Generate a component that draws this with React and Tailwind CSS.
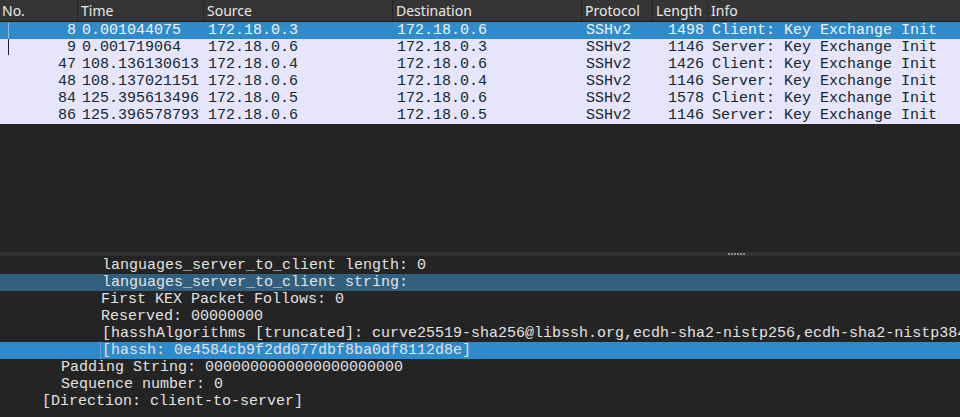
import React from 'react';

const mono = { fontFamily: '"Liberation Mono", "DejaVu Sans Mono", monospace' };

const packets = [
  { no: 8, time: '0.001044075', src: '172.18.0.3', dst: '172.18.0.6', proto: 'SSHv2', len: 1498, info: 'Client: Key Exchange Init', selected: true },
  { no: 9, time: '0.001719064', src: '172.18.0.6', dst: '172.18.0.3', proto: 'SSHv2', len: 1146, info: 'Server: Key Exchange Init' },
  { no: 47, time: '108.136130613', src: '172.18.0.4', dst: '172.18.0.6', proto: 'SSHv2', len: 1426, info: 'Client: Key Exchange Init' },
  { no: 48, time: '108.137021151', src: '172.18.0.6', dst: '172.18.0.4', proto: 'SSHv2', len: 1146, info: 'Server: Key Exchange Init' },
  { no: 84, time: '125.395613496', src: '172.18.0.5', dst: '172.18.0.6', proto: 'SSHv2', len: 1578, info: 'Client: Key Exchange Init' },
  { no: 86, time: '125.396578793', src: '172.18.0.6', dst: '172.18.0.5', proto: 'SSHv2', len: 1146, info: 'Server: Key Exchange Init' },
];

// the hasshAlgorithms line runs off the right edge, as in the real pane
const details = [
  { text: 'languages_server_to_client length: 0', indent: 'pl-[102px]' },
  { text: 'languages_server_to_client string:', indent: 'pl-[102px]', hl: 'bg-[#325f7e]' },
  { text: 'First KEX Packet Follows: 0', indent: 'pl-[101px]' },
  { text: 'Reserved: 00000000', indent: 'pl-[101px]' },
  { text: '[hasshAlgorithms [truncated]: curve25519-sha256@libssh.org,ecdh-sha2-nistp256,ecdh-sha2-nistp384,ecdh-sha2-nistp521', indent: 'pl-[102px]' },
  { text: '[hassh: 0e4584cb9f2dd077dbf8ba0df8112d8e]', indent: 'pl-[102px]', hl: 'bg-[#2e8bcb]', focus: true },
  { text: 'Padding String: 0000000000000000000000', indent: 'pl-[61px]' },
  { text: 'Sequence number: 0', indent: 'pl-[61px]' },
  { text: '[Direction: client-to-server]', indent: 'pl-[42px]' },
];

function HeaderCell({ label, className }) {
  return (
    <div className={`h-full flex items-center border-r border-[#262626] ${className}`}>
      {label}
    </div>
  );
}

export default function App() {
  return (
    <div className="w-[960px] h-[417px] bg-[#242424] overflow-hidden flex flex-col">
      {/* packet list */}
      <div className="h-[22px] bg-[#353535] border-b border-[#1e1e1e] flex text-[14px] text-[#e8e8e8]" style={{ fontFamily: '"Noto Sans", "Open Sans", sans-serif' }}>
        <HeaderCell label="No." className="w-[78px] pl-[2px]" />
        <HeaderCell label="Time" className="w-[126px] pl-[3px]" />
        <HeaderCell label="Source" className="w-[189px] pl-[3px]" />
        <HeaderCell label="Destination" className="w-[189px] pl-[3px]" />
        <HeaderCell label="Protocol" className="w-[71px] pl-[3px]" />
        <HeaderCell label="Length" className="w-[55px] pl-[3px]" />
        <div className="h-full flex items-center pl-[3px] flex-1">Info</div>
      </div>
      <div className="text-[15px]" style={mono}>
        {packets.map((p, i) => (
          <div
            key={p.no}
            className={`relative h-[17px] leading-[17px] flex whitespace-nowrap ${p.selected ? 'bg-[#2f8bcb] text-[#eef4fa]' : 'bg-[#e6e5fc] text-[#12272e]'}`}
          >
            {i < 2 && (
              <div className={`absolute left-[8px] w-px ${i === 0 ? 'top-[1px] bottom-0 bg-[#9bb8cf]' : 'top-0 bottom-[1px] bg-[#222222]'}`} />
            )}
            <div className="w-[78px] text-right pr-[2px]">{p.no}</div>
            <div className="w-[126px] pl-[4px]">{p.time}</div>
            <div className="w-[189px] pl-[4px]">{p.src}</div>
            <div className="w-[189px] pl-[4px]">{p.dst}</div>
            <div className="w-[71px] pl-[4px]">{p.proto}</div>
            <div className="w-[55px] text-right pr-[4px]">{p.len}</div>
            <div className="pl-[4px] flex-1">{p.info}</div>
          </div>
        ))}
      </div>
      <div className="flex-1 bg-[#242424]" />

      {/* splitter */}
      <div className="h-[4px] bg-[#323232] flex items-center justify-center pl-[513px]">
        <div className="flex gap-px">
          {[0, 1, 2, 3, 4, 5].map((d) => (
            <div key={d} className="w-[2px] h-[2px] bg-[#8a8a8a]" />
          ))}
        </div>
      </div>

      {/* packet details */}
      <div className="h-[161px] pt-[1px] text-[15px] text-[#e2e2e2]" style={mono}>
        {details.map((d, i) => (
          <div
            key={i}
            className={`relative h-[17px] leading-[17px] whitespace-nowrap overflow-hidden ${d.indent} ${d.hl || ''}`}
          >
            {d.focus && <div className="absolute left-[100px] top-0 bottom-0 w-px bg-[#5aa3d6]" />}
            {d.text}
          </div>
        ))}
      </div>
    </div>
  );
}
